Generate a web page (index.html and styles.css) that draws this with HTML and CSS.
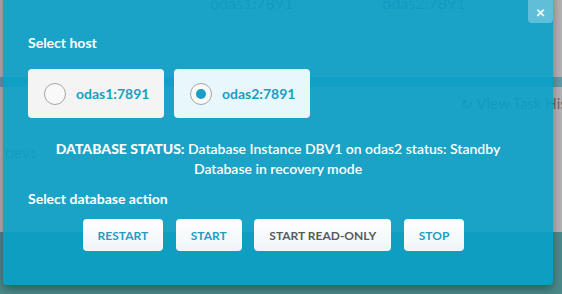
FILE: index.html
```html
<!DOCTYPE html>
<html lang="en">
<head>
    <meta charset="UTF-8">
    <title>Database actions</title>
    <link rel="stylesheet" href="styles.css">
</head>
<body>
    <div class="page">
        <div class="cols">
            <span class="col-name">odas1:7891</span>
            <span class="col-name">odas2:7891</span>
        </div>
        <div class="band"></div>
        <div class="middle">
            <div class="tasks"><span class="tasks-icon">&#x21BB;</span> View Task History</div>
            <div class="db-name">DBV1</div>
        </div>
        <div class="lower"></div>
    </div>

    <div class="modal">
        <button class="close">&times;</button>

        <div class="label">Select host</div>

        <div class="hosts">
            <label class="host">
                <span class="radio"></span>
                <span class="host-name">odas1:7891</span>
            </label>
            <label class="host selected">
                <span class="radio"><span class="dot"></span></span>
                <span class="host-name">odas2:7891</span>
            </label>
        </div>

        <p class="status"><strong>DATABASE STATUS:</strong> Database Instance DBV1 on odas2 status: Standby Database in recovery mode</p>

        <div class="label">Select database action</div>

        <div class="actions">
            <button class="action">Restart</button>
            <button class="action">Start</button>
            <button class="action muted">Start read-only</button>
            <button class="action">Stop</button>
        </div>
    </div>
</body>
</html>
```

FILE: styles.css
```css
* { margin: 0; padding: 0; box-sizing: border-box; }
body {
    font-family: Lato, "Open Sans", sans-serif;
    width: 562px;
    height: 294px;
    overflow: hidden;
    position: relative;
    background: #b2b2b2;
}

/* page behind the dialog */
.page { display: flex; flex-direction: column; height: 294px; color: #6a6a6a; }
.cols { height: 77px; padding-left: 210px; display: flex; gap: 89px; }
.col-name { font-size: 16px; line-height: 16px; margin-top: -5px; }
.band { height: 10px; background: #5f9aa6; }
.middle { height: 145px; }
.tasks { padding: 7px 0 0 461px; font-size: 15px; line-height: 18px; white-space: nowrap; }
.tasks-icon { font-size: 14px; }
.db-name { padding: 34px 0 0 5px; font-size: 12px; line-height: 14px; }
.lower { flex: 1; background: #4a8a8a; }

/* dialog */
.modal {
    position: absolute;
    left: 3px;
    top: -10px;
    width: 550px;
    height: 295px;
    padding: 43px 25px 0;
    background: rgba(6, 160, 202, 0.88);
    border-radius: 4px;
    box-shadow: 0 4px 10px rgba(0, 0, 0, 0.35);
    color: white;
}
.close {
    position: absolute;
    top: 0;
    right: 0;
    width: 25px;
    height: 33px;
    padding-top: 10px;
    border: none;
    border-radius: 4px;
    background: rgba(255, 255, 255, 0.3);
    color: white;
    font-family: Lato, sans-serif;
    font-size: 16px;
    font-weight: bold;
    line-height: 23px;
}
.label { font-size: 14px; line-height: 20px; font-weight: bold; }

.hosts { display: flex; gap: 10px; margin-top: 16px; }
.host {
    width: 136px;
    height: 49px;
    display: flex;
    align-items: center;
    gap: 10px;
    padding-left: 16px;
    background: #f4f4f4;
    border-radius: 4px;
}
.host.selected { background: #e8f7fc; }
.radio {
    width: 22px;
    height: 22px;
    border: 1px solid #a5a5a5;
    border-radius: 50%;
    background: #f9f9f9;
    display: flex;
    align-items: center;
    justify-content: center;
}
.dot { width: 10px; height: 10px; border-radius: 50%; background: #1a9ec4; }
.host-name { color: #1a9ec4; font-size: 14px; font-weight: bold; }

.status { margin: 21px 0 0; text-align: center; font-size: 14px; line-height: 20px; font-weight: 600; }
.status + .label { margin-top: 10px; }

.actions { margin-top: 10px; text-align: center; font-size: 14px; }
.action {
    display: inline-block;
    height: 32px;
    padding: 0 15px;
    margin-right: 9px;
    border: none;
    border-radius: 4px;
    background: linear-gradient(#ffffff, #eef5f7);
    color: #1a9ec4;
    font-family: Lato, sans-serif;
    font-size: 12px;
    font-weight: bold;
    text-transform: uppercase;
}
.action.muted { color: #5a5a5a; }
```
